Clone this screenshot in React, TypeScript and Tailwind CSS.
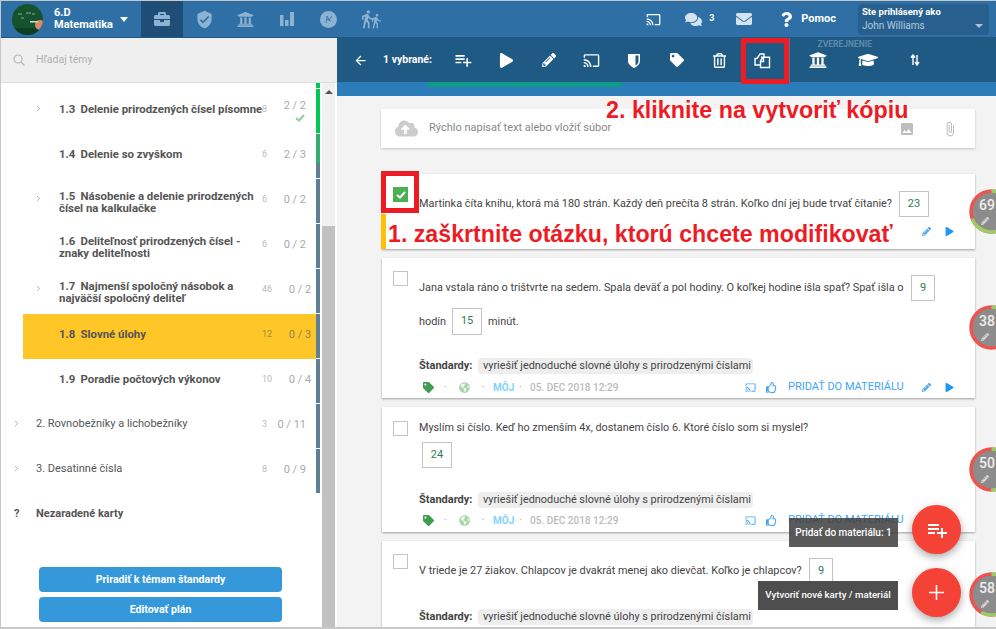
import type { ReactNode } from 'react';
import { ChevronRight } from 'lucide-react';
import {
  FaBriefcase,
  FaCloudUploadAlt,
  FaComments,
  FaEnvelope,
  FaGlobeAmericas,
  FaGraduationCap,
  FaPencilAlt,
  FaPlay,
  FaQuestion,
  FaRegThumbsUp,
  FaRegTrashAlt,
  FaTag,
  FaUniversity,
} from 'react-icons/fa';
import {
  MdArrowBack,
  MdAttachFile,
  MdCast,
  MdDirectionsWalk,
  MdImage,
  MdPlaylistAdd,
  MdVerifiedUser,
} from 'react-icons/md';

const topics = [
  { num: '1.3', title: 'Delenie prirodzených čísel písomne', count: 8, done: '2 / 2', arrow: true, bar: 'bg-[#00c853]', fill: 'h-full', check: true, single: true },
  { num: '1.4', title: 'Delenie so zvyškom', count: 6, done: '2 / 3', fill: 'h-[67%]', bar: 'bg-[#2fae6e]', single: true },
  { num: '1.5', title: 'Násobenie a delenie prirodzených čísel na kalkulačke', count: 6, done: '0 / 2', arrow: true },
  { num: '1.6', title: 'Deliteľnosť prirodzených čísel - znaky deliteľnosti', count: 6, done: '0 / 2' },
  { num: '1.7', title: 'Najmenší spoločný násobok a najväčší spoločný deliteľ', count: 46, done: '0 / 2', arrow: true },
  { num: '1.8', title: 'Slovné úlohy', count: 12, done: '0 / 3', active: true, single: true },
  { num: '1.9', title: 'Poradie počtových výkonov', count: 10, done: '0 / 4', single: true },
];

function CopyIcon() {
  return (
    <svg width="17" height="17" viewBox="0 0 17 17" fill="none" stroke="white" strokeWidth="1.4">
      <path d="M3 6.5 L6 2 H10 V5 M3 6.5 H1 V13 H6" />
      <path d="M7 5.2 H15.5 V15.5 H6.5 V9 L9 5.2" />
      <path d="M6.5 9.5 H9.5 V5.5" />
    </svg>
  );
}

function Avatar() {
  return (
    <svg width="31" height="31" viewBox="0 0 31 31" className="mt-[1px] shrink-0">
      <defs>
        <clipPath id="av">
          <circle cx="15.5" cy="15.5" r="15.5" />
        </clipPath>
      </defs>
      <g clipPath="url(#av)">
        <rect width="31" height="31" fill="#15532f" />
        <rect y="24" width="31" height="7" fill="#0e3f24" />
        <path d="M6 10h4M14 9h5M20 10h3M9 14h3" stroke="#9fc7a9" strokeWidth="0.8" />
        <circle cx="28" cy="21" r="5" fill="#d98a6a" />
        <rect x="18" y="17" width="8" height="1.5" fill="#cfe0d2" />
      </g>
    </svg>
  );
}

function ToolButton({ children, width = 'w-[42.7px]' }: { children: ReactNode; width?: string }) {
  return <div className={`flex shrink-0 items-center justify-center text-white ${width}`}>{children}</div>;
}

function Gauge({ value, top }: { value: number; top: string }) {
  const c = 2 * Math.PI * 20.5;
  return (
    <div className={`absolute left-[632px] ${top}`}>
      <svg width="45" height="45" viewBox="0 0 45 45">
        <circle cx="22.5" cy="22.5" r="21" fill="#8c8c8c" />
        <circle cx="22.5" cy="22.5" r="20.5" fill="none" stroke="#ef5350" strokeWidth="3.5" />
        <circle
          cx="22.5"
          cy="22.5"
          r="20.5"
          fill="none"
          stroke="#9ccc65"
          strokeWidth="3.5"
          strokeDasharray={`${(c * value) / 100} ${c}`}
          transform="rotate(-90 22.5 22.5)"
        />
      </svg>
      <div className="absolute left-[10px] top-[6px] text-[14px] font-medium text-[#eeeeee]">{value}</div>
      <FaPencilAlt className="absolute left-[12px] top-[28px] text-[8px] text-[#dddddd]" />
    </div>
  );
}

function Answer({ value, className = '' }: { value: string; className?: string }) {
  return (
    <span className={`inline-flex h-[26px] shrink-0 items-center justify-center border border-[#c4c4c4] bg-white text-[11px] text-[#2f7d4f] ${className}`}>
      {value}
    </span>
  );
}

function Standards() {
  return (
    <div className="flex h-[16px] items-center pl-[37px] text-[10.9px] text-[#444444]">
      <span className="w-[59px] text-[11px] font-bold">Štandardy:</span>
      <span className="flex h-[16px] w-[275px] items-center whitespace-nowrap rounded-sm bg-[#eeeeee] pl-[5px]">vyriešiť jednoduché slovné úlohy s prirodzenými číslami</span>
    </div>
  );
}

function Meta() {
  return (
    <div className="flex h-[14px] items-center pl-[41px] pr-[21px] text-[10px]">
      <FaTag className="w-[11px] text-[11px] text-[#3f9c52]" />
      <span className="ml-[10px] w-[15px] text-[#999999]">·</span>
      <FaGlobeAmericas className="w-[11px] text-[11px] text-[#a5d6a7]" />
      <span className="ml-[12px] w-[11px] text-[#999999]">·</span>
      <span className="w-[26px] font-bold text-[#81d4fa]">MÔJ</span>
      <span className="w-[11px] text-[#999999]">·</span>
      <span className="font-medium text-[#bbbbbb]">05. DEC 2018 12:29</span>
      <MdCast className="ml-auto text-[11px] text-[#42a5f5]" />
      <FaRegThumbsUp className="ml-[10px] text-[11px] text-[#42a5f5]" />
      <span className="ml-[11px] w-[123px] text-[11px] text-[#42a5f5]">PRIDAŤ DO MATERIÁLU</span>
      <FaPencilAlt className="ml-[11px] text-[9px] text-[#42a5f5]" />
      <FaPlay className="ml-[14px] text-[9px] text-[#2196f3]" />
    </div>
  );
}

function CheckBox({ checked }: { checked?: boolean }) {
  if (checked) {
    return (
      <span className="flex h-[15px] w-[15px] shrink-0 items-center justify-center bg-[#4caf50]">
        <svg width="10" height="8" viewBox="0 0 10 8" fill="none" stroke="white" strokeWidth="2">
          <path d="M1 4 L4 6.5 L9 1" />
        </svg>
      </span>
    );
  }
  return <span className="block h-[15px] w-[15px] shrink-0 border border-[#c4c4c4] bg-white" />;
}

function Sidebar() {
  return (
    <div className="flex h-full w-[336px] shrink-0 flex-col bg-white">
      <div className="flex h-[45px] shrink-0 items-center border-b border-[#dddddd] bg-[#efefef] pl-[12px]">
        <svg width="12" height="12" viewBox="0 0 12 12" fill="none" stroke="#b5b5b5" strokeWidth="1.2">
          <circle cx="5" cy="5" r="4" />
          <path d="M8 8 L11.5 11.5" />
        </svg>
        <span className="ml-[11px] text-[10.5px] text-[#b0b0b0]">Hľadaj témy</span>
      </div>
      <div className="flex min-h-0 flex-1">
        <div className="w-[319px] shrink-0">
          <div className="flex h-[6px] justify-end">
            <div className="h-[5px] w-[4px] bg-[#00c853]" />
          </div>
          {topics.map((t) => (
            <div key={t.num} className="flex h-[45px]">
              <div className={`ml-[22px] flex w-[293px] items-center pl-[13px] pr-[10px] ${t.active ? 'bg-[#ffc627]' : ''}`}>
                <span className="-ml-[2px] mb-[7px] w-[25px] shrink-0 text-[#777777]">{t.arrow && <ChevronRight size={9} strokeWidth={1.5} />}</span>
                <div className={`w-[203px] shrink-0 text-[11.4px] font-bold leading-[12px] text-[#555555] ${t.single ? 'mb-[5px] whitespace-nowrap' : ''}`}>
                  {t.num}{'\u00a0\u2009'}{t.title}
                </div>
                <span className={`mb-[3px] flex-1 text-right text-[9px] ${t.active ? 'text-[#a08a4a]' : 'text-[#bbbbbb]'}`}>{t.count}</span>
                <span className={`mb-[3px] w-[39px] shrink-0 text-right text-[11px] ${t.active ? 'text-[#8f8258]' : 'text-[#aaaaaa]'}`}>
                  {t.done}
                  {t.check && (
                    <svg width="10" height="8" viewBox="0 0 10 8" fill="none" stroke="#8fce9f" strokeWidth="2" className="ml-auto mr-[1px]">
                      <path d="M1 4 L4 6.5 L9 1" />
                    </svg>
                  )}
                </span>
              </div>
              <div className="h-[44px] w-[4px] bg-[#5f7f92]">
                {t.bar && <div className={`w-full ${t.fill} ${t.bar}`} />}
              </div>
            </div>
          ))}
          {[
            { label: '2. Rovnobežníky a lichobežníky', count: 3, done: '0 / 11' },
            { label: '3. Desatinné čísla', count: 8, done: '0 / 9' },
          ].map((t) => (
            <div key={t.label} className="flex h-[45px]">
              <div className="flex w-[315px] items-center pl-[13px] pr-[10px]">
                <span className="-ml-[2px] mb-[7px] w-[24px] shrink-0 text-[#777777]">
                  <ChevronRight size={9} strokeWidth={1.5} />
                </span>
                <span className="mb-[5px] w-[210px] text-[11px] text-[#555555]">{t.label}</span>
                <span className="mb-[3px] flex-1 text-right text-[9px] text-[#bbbbbb]">{t.count}</span>
                <span className="mb-[3px] w-[39px] shrink-0 text-right text-[11px] text-[#aaaaaa]">{t.done}</span>
              </div>
              <div className="h-[44px] w-[4px] bg-[#5f7f92]" />
            </div>
          ))}
          <div className="flex h-[45px] items-center pl-[13px] text-[11px] font-bold text-[#555555]">
            <span className="mb-[5px] w-[22px]">?</span>
            <span className="mb-[5px]">Nezaradené karty</span>
          </div>
          <div className="ml-[38px] mt-[28px] flex w-[243px] flex-col gap-[5px]">
            <button className="h-[25px] rounded-sm bg-[#3498db] pt-[1px] text-[10.6px] font-bold text-white">Priradiť k témam štandardy</button>
            <button className="h-[25px] rounded-sm bg-[#3498db] pt-[1px] text-[10.6px] font-bold text-white">Editovať plán</button>
          </div>
        </div>
        <div className="ml-[2px] flex w-[13px] shrink-0 flex-col bg-[#f1f1f1]">
          <div className="flex h-[143px] shrink-0 justify-center pt-[7px]">
            <div className="h-0 w-0 border-x-[4px] border-b-[4px] border-x-transparent border-b-[#555555]" />
          </div>
          <div className="flex-1 bg-[#c1c1c1]" />
        </div>
      </div>
    </div>
  );
}

export default function App() {
  return (
    <div className="relative h-[629px] w-[996px] overflow-hidden border-b-2 border-l border-t border-[#c8c8c8] bg-[#f3f3f3] font-['Roboto',sans-serif]">
      {/* top bar */}
      <div className="flex h-[37px] items-center border-b border-[#24577f] bg-[#2e6fa6] text-white">
        <div className="ml-[11px] flex items-center">
          <Avatar />
          <div className="ml-[11px] w-[65px] text-[11px] font-bold leading-[12px]">
            <div>6.D</div>
            <div>Matematika</div>
          </div>
          <div className="ml-[1px] h-0 w-0 border-x-[4px] border-t-[5px] border-x-transparent border-t-white" />
        </div>
        <div className="ml-[13px] flex h-full w-[42px] items-center justify-center bg-[#1e4e75]">
          <FaBriefcase className="text-[16px] text-[#8db2d2]" />
        </div>
        <div className="flex h-full items-center text-[#8db2d2]">
          <div className="flex w-[42px] justify-center"><MdVerifiedUser className="text-[19px]" /></div>
          <div className="flex w-[40px] justify-center"><FaUniversity className="text-[17px]" /></div>
          <div className="flex w-[43px] justify-center">
            <svg width="14" height="14" viewBox="0 0 14 14" fill="currentColor">
              <rect x="0" y="3" width="3.5" height="11" />
              <rect x="5" y="8" width="3.5" height="6" />
              <rect x="10" y="0" width="4" height="14" />
            </svg>
          </div>
          <div className="flex w-[41px] justify-center">
            <svg width="17" height="17" viewBox="0 0 17 17">
              <circle cx="8.5" cy="8.5" r="8.5" fill="currentColor" />
              <path d="M6 12 L7 5 L9 9 L12 5 M6 8 L11 10" stroke="#2e6fa6" strokeWidth="0.8" fill="none" />
            </svg>
          </div>
          <div className="flex w-[42px] justify-center">
            <MdDirectionsWalk className="text-[20px]" />
            <MdDirectionsWalk className="-ml-[9px] mt-[4px] text-[16px]" />
          </div>
        </div>
        <div className="ml-auto flex h-full items-center">
          <MdCast className="text-[15px]" />
          <FaComments className="ml-[24px] text-[17px] text-[#d5e3ef]" />
          <span className="ml-[7px] w-[8px] text-[9px] font-bold">3</span>
          <FaEnvelope className="ml-[19px] text-[16px] text-[#d5e3ef]" />
          <FaQuestion className="ml-[27px] text-[15px]" />
          <span className="ml-[7px] text-[11px] font-bold">Pomoc</span>
          <div className="mr-[7px] ml-[22px] flex h-[31px] w-[131px] flex-col justify-center rounded-sm bg-[#27608f] pl-[4px] pr-[6px]">
            <div className="text-[9.5px] font-bold leading-[12px]">Ste prihlásený ako</div>
            <div className="mt-[1px] flex items-center justify-between text-[10px] leading-[13px] text-[#b5cbdd]">
              John Williams
              <span className="h-0 w-0 border-x-[4px] border-t-[4px] border-x-transparent border-t-[#a9c1d6]" />
            </div>
          </div>
        </div>
      </div>

      <div className="flex h-[589px]">
        <Sidebar />
        <div className="relative min-w-0 flex-1 overflow-hidden">
          {/* selection toolbar */}
          <div className="flex h-[44px] items-center bg-[#1f5a85] text-white">
            <MdArrowBack className="ml-[16px] text-[15px]" />
            <span className="ml-[15px] w-[59px] text-[10.5px] font-bold">1 vybrané:</span>
            <ToolButton><MdPlaylistAdd className="text-[20px]" /></ToolButton>
            <ToolButton><FaPlay className="text-[15px]" /></ToolButton>
            <ToolButton><FaPencilAlt className="text-[14px]" /></ToolButton>
            <ToolButton><MdCast className="text-[17px]" /></ToolButton>
            <ToolButton>
              <svg width="12" height="15" viewBox="0 0 12 15">
                <path d="M0 1 H12 V8 C12 11 9 13.5 6 15 C3 13.5 0 11 0 8 Z" fill="white" />
                <path d="M7.5 2.5 H10.5 V8 C10.5 10 9 11.5 7.5 12.5 Z" fill="#1f5a85" />
              </svg>
            </ToolButton>
            <ToolButton><FaTag className="text-[14px]" /></ToolButton>
            <ToolButton><FaRegTrashAlt className="text-[15px]" /></ToolButton>
            <ToolButton><CopyIcon /></ToolButton>
            <div className="relative ml-[5px] h-full w-px bg-[#4a7da3]">
              <span className="absolute left-[29px] top-[0px] text-[8.5px] font-bold text-[#5e8aa8]">ZVEREJNENIE</span>
            </div>
            <ToolButton width="w-[56px]"><FaUniversity className="text-[18px]" /></ToolButton>
            <ToolButton width="w-[44px]"><FaGraduationCap className="text-[20px]" /></ToolButton>
            <ToolButton width="w-[50px]">
              <svg width="10" height="12" viewBox="0 0 10 12" fill="none" stroke="white" strokeWidth="1.4">
                <path d="M3 11 V2 M1 3.5 L3 1 L5 3.5 M7 1 V10 M5 8 L7 11 L9 8" />
              </svg>
            </ToolButton>
          </div>
          <div className="h-[14px] bg-[#2b7cb9]">
            <div className="ml-[90px] h-[5px] w-[195px] rounded-b-sm bg-[#0e9a86]" />
          </div>

          {/* composer */}
          <div className="ml-[44px] mt-[13px] flex h-[39px] w-[594px] items-center bg-white pl-[14px] pr-[17px] shadow-[0_1px_2px_rgba(0,0,0,0.2)]">
            <FaCloudUploadAlt className="text-[23px] text-[#cccccc]" />
            <span className="ml-[11px] text-[11px] text-[#888888]">Rýchlo napísať text alebo vložiť súbor</span>
            <MdImage className="ml-auto text-[16px] text-[#bdbdbd]" />
            <MdAttachFile className="ml-[27px] text-[16px] text-[#bdbdbd]" />
          </div>

          {/* cards */}
          <div className="ml-[45px] w-[593px] text-[10.9px] text-[#444444]">
            <div className="mt-[26px] h-[75px] bg-white shadow-[0_1px_2px_rgba(0,0,0,0.35)]">
              <div className="flex items-start pl-[11px] pt-[13px]">
                <CheckBox checked />
                <div className="ml-[11px] mt-[4px] flex items-center">
                  <span className="w-[480px] whitespace-nowrap pt-[1px]">Martinka číta knihu, ktorá má 180 strán. Každý deň prečíta 8 strán. Koľko dní jej bude trvať čítanie?</span>
                  <Answer value="23" className="w-[30px]" />
                </div>
              </div>
              <div className="mt-[10px] flex justify-end pr-[21px]">
                <FaPencilAlt className="text-[9px] text-[#42a5f5]" />
                <FaPlay className="ml-[14px] text-[9px] text-[#2196f3]" />
              </div>
            </div>

            <div className="mt-[9px] h-[140px] bg-white shadow-[0_1px_2px_rgba(0,0,0,0.35)]">
              <div className="flex items-start pl-[11px] pt-[13px]">
                <CheckBox />
                <div className="ml-[11px] mt-[4px] flex items-center">
                  <span className="w-[492px] whitespace-nowrap pt-[1px]">Jana vstala ráno o trištvrte na sedem. Spala deväť a pol hodiny. O koľkej hodine išla spať? Spať išla o</span>
                  <Answer value="9" className="w-[24px]" />
                </div>
              </div>
              <div className="ml-[37px] mt-[7px] flex items-center">
                <span className="pt-[1px]">hodín</span>
                <Answer value="15" className="mx-[6px] h-[27px] w-[30px]" />
                <span className="pt-[1px]">minút.</span>
              </div>
              <div className="mt-[23px]"><Standards /></div>
              <div className="mt-[6px]"><Meta /></div>
            </div>

            <div className="mt-[9px] h-[125px] bg-white shadow-[0_1px_2px_rgba(0,0,0,0.35)]">
              <div className="flex items-start pl-[11px] pt-[14px]">
                <CheckBox />
                <span className="ml-[11px] -mt-[1px] text-[10.8px]">Myslím si číslo. Keď ho zmenším 4x, dostanem číslo 6. Ktoré číslo som si myslel?</span>
              </div>
              <div className="ml-[40px] mt-[6px] flex"><Answer value="24" className="w-[30px]" /></div>
              <div className="mt-[24px]"><Standards /></div>
              <div className="mt-[5px]"><Meta /></div>
            </div>

            <div className="mt-[9px] h-[120px] bg-white shadow-[0_1px_2px_rgba(0,0,0,0.35)]">
              <div className="flex items-start pl-[11px] pt-[13px]">
                <CheckBox />
                <div className="ml-[11px] mt-[4px] flex items-center">
                  <span className="w-[390px] whitespace-nowrap">V triede je 27 žiakov. Chlapcov je dvakrát menej ako dievčat. Koľko je chlapcov?</span>
                  <Answer value="9" className="w-[24px]" />
                </div>
              </div>
              <div className="mt-[25px]"><Standards /></div>
            </div>
          </div>

          <Gauge value={69} top="top-[151px]" />
          <Gauge value={38} top="top-[267px]" />
          <Gauge value={50} top="top-[409px]" />
          <Gauge value={58} top="top-[534px]" />

          {/* annotations */}
          <div className="absolute left-[404px] top-[0px] h-[46px] w-[48px] border-[5px] border-[#ed1c24]" />
          <div className="absolute left-[44px] top-[133px] h-[42px] w-[38px] border-[5px] border-[#ed1c24]" />
          <div className="absolute left-[269px] top-[59px] whitespace-nowrap font-['Liberation_Sans',sans-serif] text-[23.3px] font-bold leading-[26px] text-[#ed1c24]">2. kliknite na vytvoriť kópiu</div>
          <div className="absolute left-[51px] top-[183px] whitespace-nowrap font-['Liberation_Sans',sans-serif] text-[23.2px] font-bold leading-[26px] text-[#ed1c24]">1. zaškrtnite otázku, ktorú chcete modifikovať</div>
          <div className="absolute left-[44px] top-[176px] h-[35px] w-[5px] bg-[#ffc107]" />

          {/* floating actions */}
          <div className="absolute left-[452px] top-[480px] flex h-[29px] w-[109px] items-center justify-center bg-[#3d3d3d]/85 text-[10px] font-medium text-white">Pridať do materiálu: 1</div>
          <div className="absolute left-[421px] top-[543px] flex h-[29px] w-[140px] items-center justify-center bg-[#444444]/95 text-[9.7px] font-medium text-white">Vytvoriť nové karty / materiál</div>
          <div className="absolute left-[575px] top-[467px] flex h-[49px] w-[49px] items-center justify-center rounded-full bg-[#f44336] text-white shadow-[0_3px_8px_rgba(0,0,0,0.35)]">
            <MdPlaylistAdd className="text-[24px]" />
          </div>
          <div className="absolute left-[575px] top-[530px] flex h-[49px] w-[49px] items-center justify-center rounded-full bg-[#f44336] text-white shadow-[0_3px_8px_rgba(0,0,0,0.35)]">
            <svg width="15" height="15" viewBox="0 0 15 15" stroke="white" strokeWidth="1.6">
              <path d="M7.5 0 V15 M0 7.5 H15" />
            </svg>
          </div>
        </div>
      </div>
    </div>
  );
}
